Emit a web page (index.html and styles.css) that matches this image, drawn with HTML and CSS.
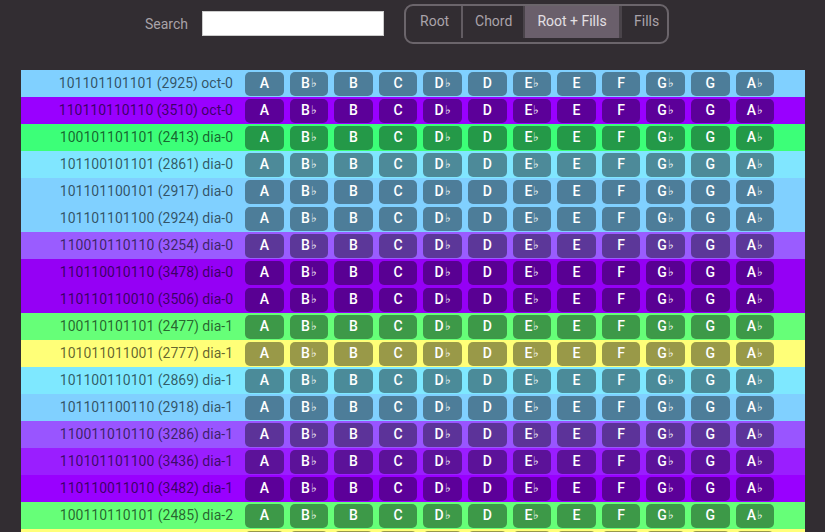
FILE: index.html
```html
<!DOCTYPE html>
<html>
<head>
<meta charset="utf-8">
<link rel="stylesheet" href="styles.css">
</head>
<body>
<header class="top">
  <label class="search-label">Search</label>
  <input class="search-input" type="text">
  <div class="seg">
    <button class="seg-btn">Root</button>
    <button class="seg-btn">Chord</button>
    <button class="seg-btn active">Root + Fills</button>
    <button class="seg-btn">Fills</button>
  </div>
</header>
<div class="table" id="table"></div>
<script src="app.js"></script>
</body>
</html>
```
FILE: styles.css
```css
html, body {
  margin: 0;
  padding: 0;
  overflow: hidden;
  background: #322d32;
  font-family: Roboto, "Liberation Sans", sans-serif;
}
body {
  height: 532px;
}
.top {
  display: flex;
  align-items: flex-start;
  padding: 4px 0 0 145px;
  height: 40px;
  margin-bottom: 26px;
}
.search-label {
  color: #a8a2a8;
  font-size: 14px;
  margin-top: 11px;
  line-height: 18px;
}
.search-input {
  margin: 7px 0 0 14px;
  width: 182px;
  height: 25px;
  box-sizing: border-box;
  border: 1px solid #ccc;
  background: #fff;
  padding: 0 4px;
  outline: none;
}
.seg {
  margin-left: 20px;
  display: flex;
  border: 2px solid #6b656b;
  border-radius: 9px;
  padding: 0 2px 6px 2px;
  height: 40px;
  box-sizing: border-box;
}
.seg-btn {
  font-family: Roboto, "Liberation Sans", sans-serif;
  font-size: 14px;
  color: #aaa3aa;
  background: transparent;
  border: none;
  border-left: 2px solid #625c62;
  height: 32px;
  padding: 0 12px 3px;
  margin: 0;
}
.seg-btn:first-child {
  border-left: none;
  border-radius: 6px 0 0 6px;
  width: 53px;
}
.seg-btn:nth-child(2) { width: 62px; }
.seg-btn:nth-child(3) { width: 96px; }
.seg-btn:nth-child(4) { width: 46px; border-left-color: #4a444a; border-left-width: 3px; }
.seg-btn.active {
  background: #6a5f6b;
  color: #e4e0e4;
  border-left-color: #4a444a;
}
.table {
  margin-left: 21px;
  width: 784px;
}
.row {
  display: flex;
  align-items: center;
  height: 27px;
  gap: 6px;
}
.label {
  width: 218px;
  box-sizing: border-box;
  text-align: right;
  padding-right: 6px;
  padding-bottom: 2px;
  font-size: 14px;
  color: rgba(0, 0, 0, 0.62);
  white-space: nowrap;
}
.note {
  width: 38.6px;
  height: 24px;
  border-radius: 5px;
  background: rgba(0, 0, 0, 0.4);
  color: #fff;
  font-size: 14px;
  font-weight: 500;
  display: flex;
  align-items: center;
  justify-content: center;
  padding-bottom: 2px;
  box-sizing: border-box;
}
.flat {
  font-size: 12px;
  font-weight: 400;
  margin-left: 1px;
}
```
FILE: app.js
```js
var rows = [
  ["101101101101 (2925) oct-0", "#80d0ff"],
  ["110110110110 (3510) oct-0", "#9900ff"],
  ["100101101101 (2413) dia-0", "#3cff78"],
  ["101100101101 (2861) dia-0", "#80e6ff"],
  ["101101100101 (2917) dia-0", "#80d0ff"],
  ["101101101100 (2924) dia-0", "#80d0ff"],
  ["110010110110 (3254) dia-0", "#9a5cff"],
  ["110110010110 (3478) dia-0", "#9500f5"],
  ["110110110010 (3506) dia-0", "#9500f5"],
  ["100110101101 (2477) dia-1", "#66ff78"],
  ["101011011001 (2777) dia-1", "#ffff78"],
  ["101100110101 (2869) dia-1", "#7ee8ff"],
  ["101101100110 (2918) dia-1", "#80d0ff"],
  ["110011010110 (3286) dia-1", "#9955ff"],
  ["110101101100 (3436) dia-1", "#9a1eff"],
  ["110110011010 (3482) dia-1", "#9900ff"],
  ["100110110101 (2485) dia-2", "#66ff78"],
  ["101011010101 (2773) dia-2", "#ffff78"]
];
var notes = ["A", "B\u266d", "B", "C", "D\u266d", "D", "E\u266d", "E", "F", "G\u266d", "G", "A\u266d"];
var table = document.getElementById("table");
rows.forEach(function (r) {
  var row = document.createElement("div");
  row.className = "row";
  row.style.background = r[1];
  var lab = document.createElement("div");
  lab.className = "label";
  lab.textContent = r[0];
  row.appendChild(lab);
  notes.forEach(function (n) {
    var b = document.createElement("div");
    b.className = "note";
    if (n.length > 1) {
      b.appendChild(document.createTextNode(n[0]));
      var f = document.createElement("span");
      f.className = "flat";
      f.textContent = n[1];
      b.appendChild(f);
    } else {
      b.textContent = n;
    }
    row.appendChild(b);
  });
  table.appendChild(row);
});
```
